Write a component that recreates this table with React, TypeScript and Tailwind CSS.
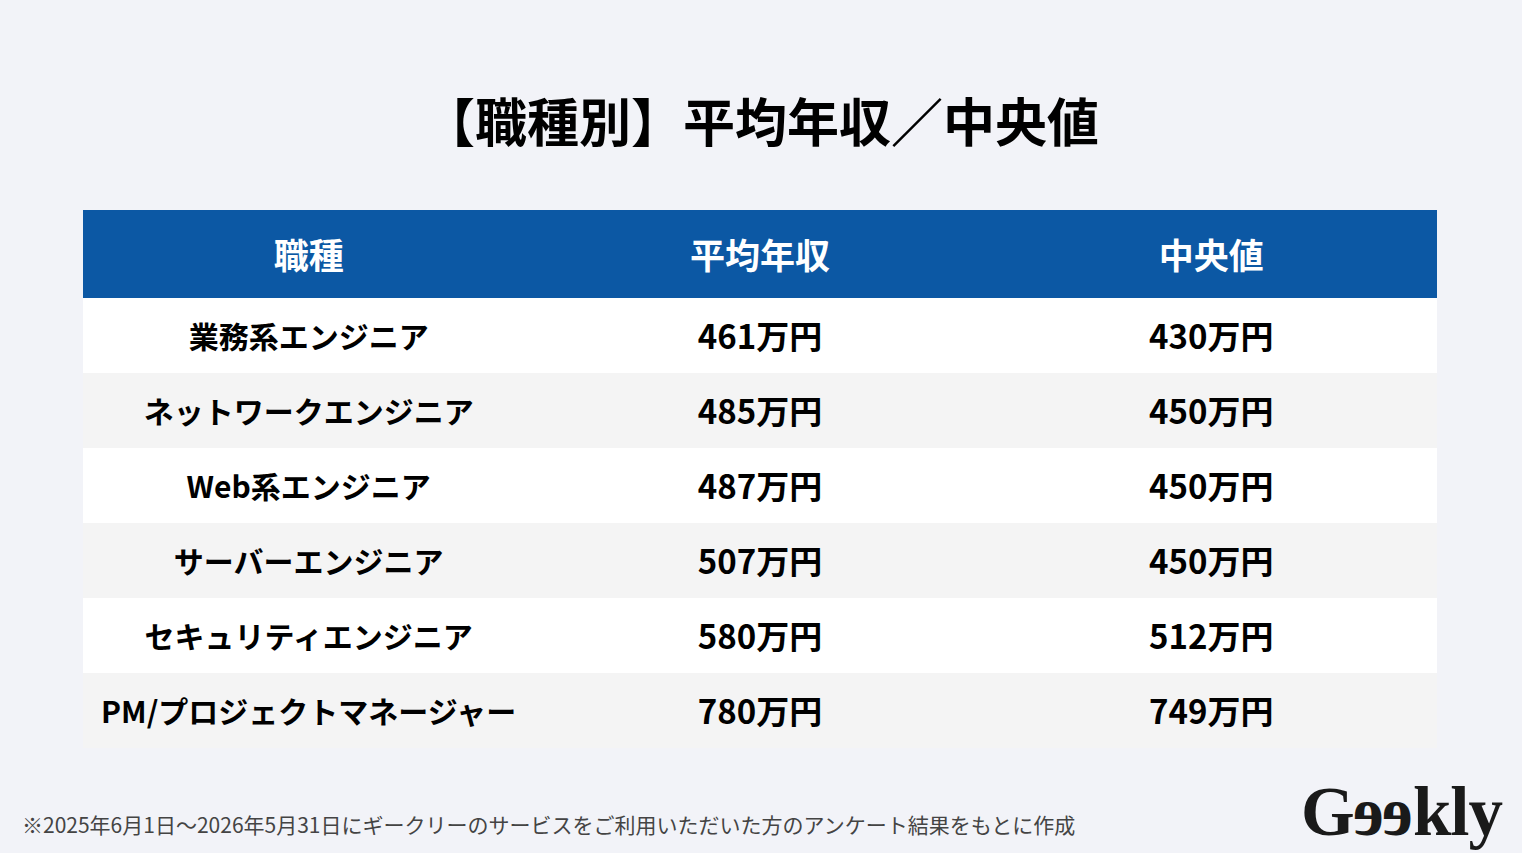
const rows = [
  { job: "業務系エンジニア", avg: "461万円", median: "430万円" },
  { job: "ネットワークエンジニア", avg: "485万円", median: "450万円" },
  { job: "Web系エンジニア", avg: "487万円", median: "450万円" },
  { job: "サーバーエンジニア", avg: "507万円", median: "450万円" },
  { job: "セキュリティエンジニア", avg: "580万円", median: "512万円" },
  { job: "PM/プロジェクトマネージャー", avg: "780万円", median: "749万円" },
];

function Logo() {
  // the two e's in the wordmark are mirrored
  return (
    <div
      className="flex items-baseline text-[69px] font-bold leading-none tracking-[-1px] text-[#1a1a1a]"
      style={{ fontFamily: '"Liberation Serif", serif' }}
    >
      <span>G</span>
      <span className="inline-block -scale-x-100">e</span>
      <span className="inline-block -scale-x-100">e</span>
      <span>kly</span>
    </div>
  );
}

export default function App() {
  return (
    <div
      className="flex h-[853px] w-[1522px] flex-col overflow-hidden bg-[#f2f3f8] text-black"
      style={{ fontFamily: '"Noto Sans CJK JP", "Noto Sans", sans-serif' }}
    >
      <h1 className="mt-[94px] text-center text-[52px] font-bold leading-none">
        【職種別】平均年収／中央値
      </h1>

      <div className="ml-[83px] mt-[64px] w-[1354px]">
        <div className="grid h-[88px] grid-cols-3 items-center bg-[#0c58a4] text-[35px] font-bold text-white">
          <div className="text-center">職種</div>
          <div className="text-center">平均年収</div>
          <div className="text-center">中央値</div>
        </div>
        {rows.map((r, i) => (
          <div
            key={r.job}
            className={
              "grid h-[75px] grid-cols-3 items-center font-bold " +
              (i % 2 === 0 ? "bg-white" : "bg-[#f4f4f4]")
            }
          >
            <div className="text-center text-[30px]">{r.job}</div>
            <div className="text-center text-[33px]">{r.avg}</div>
            <div className="text-center text-[33px]">{r.median}</div>
          </div>
        ))}
      </div>

      <div className="mt-auto flex items-end justify-between pb-[6px] pl-[22px] pr-[20px]">
        <p className="mb-[12px] text-[21px] leading-none text-[#444]">
          ※2025年6月1日〜2026年5月31日にギークリーのサービスをご利用いただいた方のアンケート結果をもとに作成
        </p>
        <Logo />
      </div>
    </div>
  );
}
